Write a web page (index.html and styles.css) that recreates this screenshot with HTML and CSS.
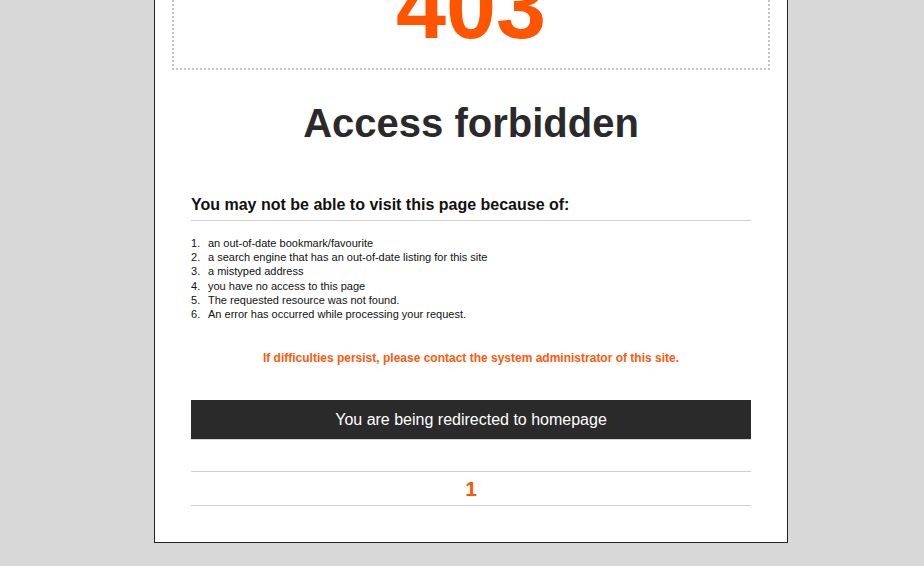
FILE: index.html
```html
<!DOCTYPE html>
<html lang="en">
<head>
<meta charset="utf-8">
<title>403 - Access forbidden</title>
<link rel="stylesheet" href="styles.css">
</head>
<body>
<div class="page">
  <div class="code-box">
    <div class="code">403</div>
  </div>
  <h1 class="title">Access forbidden</h1>
  <h2 class="subtitle">You may not be able to visit this page because of:</h2>
  <ol class="reasons">
    <li>an out-of-date bookmark/favourite</li>
    <li>a search engine that has an out-of-date listing for this site</li>
    <li>a mistyped address</li>
    <li>you have no access to this page</li>
    <li>The requested resource was not found.</li>
    <li>An error has occurred while processing your request.</li>
  </ol>
  <p class="contact">If difficulties persist, please contact the system administrator of this site.</p>
  <div class="redirect">You are being redirected to homepage</div>
  <div class="countdown">1</div>
</div>
</body>
</html>
```
FILE: styles.css
```css
html, body {
  margin: 0;
  padding: 0;
}
body {
  background: #d8d8d8;
  font-family: "Liberation Sans", Arial, sans-serif;
  color: #000;
  padding-bottom: 23px;
}
.page {
  width: 560px;
  margin: -55px 0 0 154px;
  padding: 0 36px 36px;
  background: #fff;
  border: 1px solid #222;
  border-top: 0;
}
.code-box {
  margin: 0 -19px 0 -19px;
  border: 2px dotted #c4c4c4;
  padding: 15px 0 16px;
  text-align: center;
}
.code {
  font-size: 90px;
  line-height: 90px;
  font-weight: bold;
  color: #ff5500;
}
.title {
  margin: 29px 0 0;
  font-size: 40px;
  line-height: 48px;
  font-weight: bold;
  color: #2a2a2a;
  text-align: center;
}
.subtitle {
  margin: 48px 0 0;
  padding-bottom: 5px;
  font-size: 16px;
  line-height: 20px;
  font-weight: bold;
  color: #111;
  border-bottom: 1px solid #cfcfcf;
}
.reasons {
  margin: 15px 0 0;
  padding: 0;
  list-style: none;
  counter-reset: reason;
  font-size: 11px;
  line-height: 14.2px;
  color: #111;
}
.reasons li {
  counter-increment: reason;
  display: flex;
}
.reasons li::before {
  content: counter(reason) ".";
  width: 17px;
  flex: none;
}
.contact {
  margin: 30px 0 0;
  font-size: 12px;
  line-height: 14px;
  font-weight: bold;
  color: #ff5a0a;
  text-align: center;
}
.redirect {
  margin-top: 35px;
  height: 39px;
  line-height: 40px;
  background: #2a2a2a;
  color: #fff;
  font-size: 16px;
  text-align: center;
  border-bottom: 1px solid #d6d6d6;
}
.countdown {
  margin-top: 31px;
  border-top: 1px solid #cfcfcf;
  border-bottom: 1px solid #cfcfcf;
  height: 33px;
  line-height: 33px;
  font-size: 21px;
  font-weight: bold;
  color: #ff5500;
  text-align: center;
}
```
